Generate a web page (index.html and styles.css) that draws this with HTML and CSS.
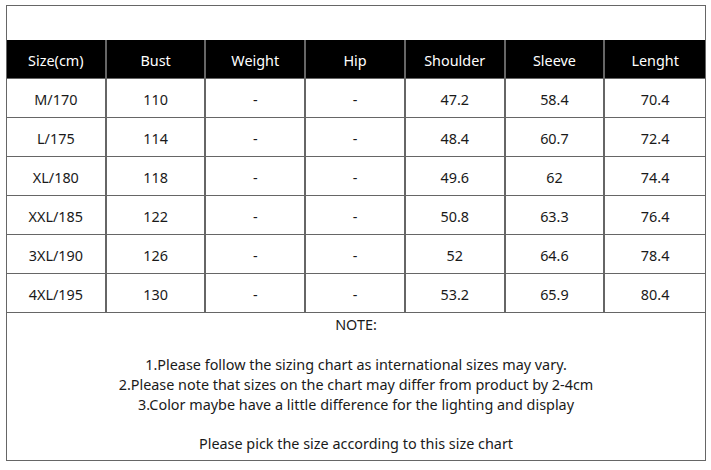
FILE: index.html
```html
<!DOCTYPE html>
<html>
<head>
<meta charset="utf-8">
<link rel="stylesheet" href="styles.css">
</head>
<body>
<div class="chart">
  <div class="top"></div>
  <div class="grid">
    <div class="cell head">Size(cm)</div>
    <div class="cell head">Bust</div>
    <div class="cell head">Weight</div>
    <div class="cell head">Hip</div>
    <div class="cell head">Shoulder</div>
    <div class="cell head">Sleeve</div>
    <div class="cell head">Lenght</div>

    <div class="cell">M/170</div><div class="cell">110</div><div class="cell">-</div><div class="cell">-</div><div class="cell">47.2</div><div class="cell">58.4</div><div class="cell">70.4</div>
    <div class="cell">L/175</div><div class="cell">114</div><div class="cell">-</div><div class="cell">-</div><div class="cell">48.4</div><div class="cell">60.7</div><div class="cell">72.4</div>
    <div class="cell">XL/180</div><div class="cell">118</div><div class="cell">-</div><div class="cell">-</div><div class="cell">49.6</div><div class="cell">62</div><div class="cell">74.4</div>
    <div class="cell">XXL/185</div><div class="cell">122</div><div class="cell">-</div><div class="cell">-</div><div class="cell">50.8</div><div class="cell">63.3</div><div class="cell">76.4</div>
    <div class="cell">3XL/190</div><div class="cell">126</div><div class="cell">-</div><div class="cell">-</div><div class="cell">52</div><div class="cell">64.6</div><div class="cell">78.4</div>
    <div class="cell">4XL/195</div><div class="cell">130</div><div class="cell">-</div><div class="cell">-</div><div class="cell">53.2</div><div class="cell">65.9</div><div class="cell">80.4</div>
  </div>
  <div class="note">
    <p class="note-title">NOTE:</p>
    <p class="note-list">1.Please follow the sizing chart as international sizes may vary.<br>2.Please note that sizes on the chart may differ from product by 2-4cm<br>3.Color maybe have a little difference for the lighting and display</p>
    <p class="note-end">Please pick the size according to this size chart</p>
  </div>
</div>
</body>
</html>
```

FILE: styles.css
```css
html, body {
  margin: 0;
  padding: 0;
  background: #fff;
}
.chart {
  margin: 5px 0 0 6px;
  width: 700px;
  height: 456px;
  box-sizing: border-box;
  border: 1px solid #666;
  font-family: "Noto Sans", "Open Sans", sans-serif;
  font-size: 14.4px;
  color: #1a1a1a;
  display: flex;
  flex-direction: column;
}
.top {
  height: 34px;
}
.grid {
  display: grid;
  grid-template-columns: repeat(7, 1fr);
  grid-auto-rows: 39px;
}
.cell {
  display: flex;
  align-items: center;
  justify-content: center;
  padding-top: 2px;
  box-sizing: border-box;
  border-right: 2px solid #666;
  border-bottom: 1px solid #666;
}
.cell:nth-child(7n) {
  border-right: none;
}
.head {
  background: #000;
  color: #fff;
}
.note {
  flex: 1;
  text-align: center;
  line-height: 20px;
}
.note p {
  margin: 0;
}
.note-title {
  padding-top: 2px;
}
.note-list {
  margin-top: 20px !important;
}
.note-end {
  margin-top: 19px !important;
}
```
